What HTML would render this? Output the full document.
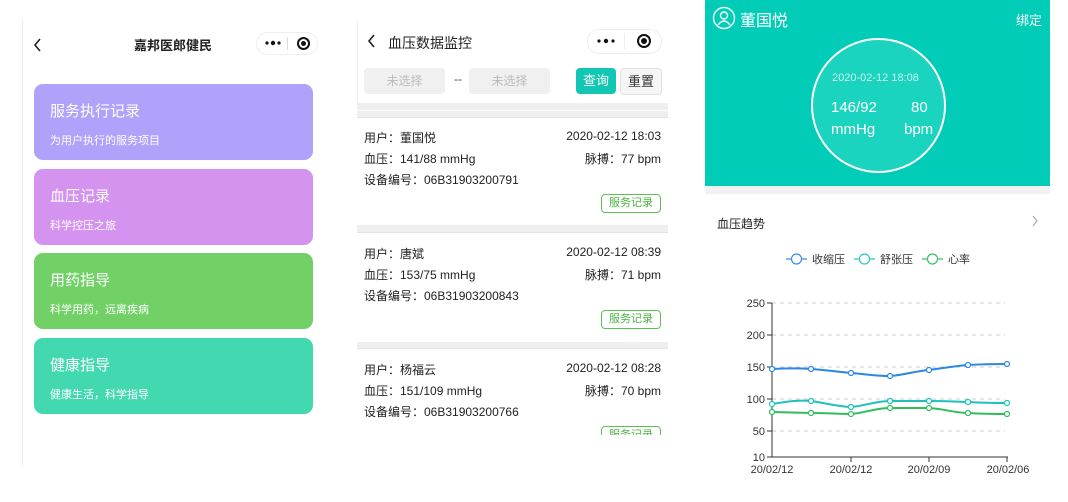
<!DOCTYPE html>
<html><head><meta charset="utf-8"><style>
*{margin:0;padding:0;box-sizing:border-box}
body{width:1068px;height:502px;background:#fff;position:relative;overflow:hidden;font-family:"Liberation Sans","Noto Sans CJK SC",sans-serif;color:#222}
.a{position:absolute}
.card{position:absolute;left:34px;width:279px;height:76px;border-radius:9px;color:#fff}
.card .t{position:absolute;left:16px;top:16px;font-size:15px}
.card .s{position:absolute;left:16px;top:48px;font-size:11px}
.cap{position:absolute;border:1px solid #eee;border-radius:12px;background:#fff}
.rec{position:absolute;left:357px;width:311px;background:#fff;font-size:12px}
.rec .l{position:absolute;left:7px}
.rec .r{position:absolute;right:7px}
.btn{position:absolute;right:7px;width:60px;height:19px;border:1px solid #5cc152;border-radius:4px;color:#4cb343;font-size:11px;text-align:center;line-height:17px}
.band{position:absolute;left:357px;width:311px;background:#efefef}
</style></head><body>
<!-- panel 1 -->
<div class="a" style="left:22px;top:20px;width:1px;height:445px;background:#eee"></div>
<svg class="a" style="left:32px;top:37px" width="10" height="16"><path d="M8 2 L3 8 L8 14" stroke="#222" stroke-width="1.6" fill="none"/></svg>
<div class="a" style="left:120px;top:35px;width:106px;text-align:center;font-size:13px;font-weight:bold">嘉邦医郎健民</div>
<div class="cap" style="left:256px;top:32px;width:62px;height:23px"></div>
<svg class="a" style="left:265px;top:40px" width="16" height="6"><circle cx="2" cy="3" r="1.6" fill="#111"/><circle cx="8" cy="3" r="2.2" fill="#111"/><circle cx="14" cy="3" r="1.6" fill="#111"/></svg>
<div class="a" style="left:287px;top:37px;width:1px;height:13px;background:#ddd"></div>
<div class="a" style="left:297px;top:37px;width:13px;height:13px;border:2px solid #111;border-radius:50%"></div>
<div class="a" style="left:301px;top:41px;width:5px;height:5px;background:#111;border-radius:50%"></div>
<div class="card" style="top:84px;background:#b0a2fb"><div class="t">服务执行记录</div><div class="s">为用户执行的服务项目</div></div>
<div class="card" style="top:169px;background:#d393ee"><div class="t">血压记录</div><div class="s">科学控压之旅</div></div>
<div class="card" style="top:253px;background:#72d166"><div class="t">用药指导</div><div class="s">科学用药，远离疾病</div></div>
<div class="card" style="top:338px;background:#42d8b0"><div class="t">健康指导</div><div class="s">健康生活，科学指导</div></div>

<!-- panel 2 -->
<div class="a" style="left:357px;top:20px;width:1px;height:415px;background:#f3f3f3"></div>
<svg class="a" style="left:366px;top:33px" width="10" height="16"><path d="M8 2 L3 8 L8 14" stroke="#222" stroke-width="1.6" fill="none"/></svg>
<div class="a" style="left:388px;top:33px;font-size:14px">血压数据监控</div>
<div class="cap" style="left:587px;top:29px;width:75px;height:25px"></div>
<svg class="a" style="left:597px;top:38px" width="18" height="6"><circle cx="2" cy="3" r="1.6" fill="#111"/><circle cx="9" cy="3" r="2.2" fill="#111"/><circle cx="16" cy="3" r="1.6" fill="#111"/></svg>
<div class="a" style="left:624px;top:33px;width:1px;height:16px;background:#eee"></div>
<div class="a" style="left:637px;top:34px;width:14px;height:14px;border:2px solid #111;border-radius:50%"></div>
<div class="a" style="left:641px;top:38px;width:6px;height:6px;background:#111;border-radius:50%"></div>
<div class="a" style="left:364px;top:68px;width:81px;height:26px;background:#f0f0f0;border-radius:4px;color:#bbb;font-size:12px;text-align:center;line-height:26px">未选择</div>
<div class="a" style="left:454px;top:72px;font-size:12px;color:#444">--</div>
<div class="a" style="left:469px;top:68px;width:81px;height:26px;background:#f0f0f0;border-radius:4px;color:#bbb;font-size:12px;text-align:center;line-height:26px">未选择</div>
<div class="a" style="left:576px;top:68px;width:40px;height:26px;background:#11c6b2;border-radius:4px;color:#fff;font-size:13px;text-align:center;line-height:26px">查询</div>
<div class="a" style="left:620px;top:68px;width:42px;height:27px;background:#f6f6f6;border:1px solid #e2e2e2;border-radius:4px;color:#333;font-size:13px;text-align:center;line-height:25px">重置</div>
<div class="band" style="top:103px;height:15px;border-bottom:1px solid #e2e2e2"><div style="margin-top:7px;height:1px;background:#fafafa"></div></div>
<div class="rec" style="top:118px;height:107px">
<div class="l" style="top:11px">用户：董国悦</div><div class="r" style="top:11px">2020-02-12 18:03</div>
<div class="l" style="top:32px">血压：141/88 mmHg</div><div class="r" style="top:32px">脉搏：77 bpm</div>
<div class="l" style="top:53px">设备编号：06B31903200791</div>
<div class="btn" style="top:76px">服务记录</div></div>
<div class="band" style="top:225px;height:8px;border-bottom:1px solid #e4e4e4"></div>
<div class="rec" style="top:233px;height:109px">
<div class="l" style="top:12px">用户：唐斌</div><div class="r" style="top:12px">2020-02-12 08:39</div>
<div class="l" style="top:33px">血压：153/75 mmHg</div><div class="r" style="top:33px">脉搏：71 bpm</div>
<div class="l" style="top:54px">设备编号：06B31903200843</div>
<div class="btn" style="top:77px">服务记录</div></div>
<div class="band" style="top:342px;height:7px;border-bottom:1px solid #e4e4e4"></div>
<div class="rec" style="top:349px;height:86px;overflow:hidden">
<div class="l" style="top:12px">用户：杨福云</div><div class="r" style="top:12px">2020-02-12 08:28</div>
<div class="l" style="top:33px">血压：151/109 mmHg</div><div class="r" style="top:33px">脉搏：70 bpm</div>
<div class="l" style="top:54px">设备编号：06B31903200766</div>
<div class="btn" style="top:77px">服务记录</div></div>

<!-- panel 3 -->
<div class="a" style="left:705px;top:0;width:345px;height:186px;background:#00ccb8"></div>
<div class="a" style="left:705px;top:186px;width:345px;height:8px;background:#f2f2f2"></div>
<svg class="a" style="left:712px;top:6px" width="24" height="24"><circle cx="12" cy="12" r="10.5" stroke="#fff" stroke-width="1.4" fill="none"/><circle cx="12" cy="9.5" r="3.5" stroke="#fff" stroke-width="1.4" fill="none"/><path d="M6 19 Q12 11 18 19" stroke="#fff" stroke-width="1.4" fill="none"/></svg>
<div class="a" style="left:740px;top:7px;font-size:16px;color:#fff">董国悦</div>
<div class="a" style="left:1016px;top:10px;font-size:13px;color:#fff">绑定</div>
<div class="a" style="left:811px;top:38px;width:135px;height:135px;border:2px solid #fff;border-radius:50%;background:#1ad4bf"></div>
<div class="a" style="left:832px;top:72px;font-size:11px;color:#c8f4ee">2020-02-12 18:08</div>
<div class="a" style="left:831px;top:99px;font-size:15px;color:#fff">146/92</div>
<div class="a" style="left:911px;top:99px;font-size:15px;color:#fff">80</div>
<div class="a" style="left:831px;top:121px;font-size:15px;color:#fff">mmHg</div>
<div class="a" style="left:904px;top:121px;font-size:15px;color:#fff">bpm</div>
<div class="a" style="left:717px;top:215px;font-size:12px">血压趋势</div>
<svg class="a" style="left:1031px;top:214px" width="8" height="14"><path d="M2 2 L6 7 L2 12" stroke="#aaa" stroke-width="1.2" fill="none"/></svg>
<svg class="a" style="left:700px;top:240px" width="368" height="262" font-family="Liberation Sans, Noto Sans CJK SC, sans-serif" font-size="11">
<g fill="#fff" stroke-width="1.2">
<line x1="86" y1="19" x2="107" y2="19" stroke="#3a8ee6"/><circle cx="96.5" cy="19" r="5" stroke="#3a8ee6"/>
<line x1="154" y1="19" x2="175" y2="19" stroke="#2ec7c0"/><circle cx="164.5" cy="19" r="5" stroke="#2ec7c0"/>
<line x1="222" y1="19" x2="243" y2="19" stroke="#36c265"/><circle cx="232.5" cy="19" r="5" stroke="#36c265"/>
</g>
<g fill="#333"><text x="112" y="23">收缩压</text><text x="180" y="23">舒张压</text><text x="248" y="23">心率</text></g>
<g stroke="#ccc" stroke-dasharray="4 4"><line x1="72" y1="63" x2="305" y2="63"/><line x1="72" y1="95" x2="305" y2="95"/><line x1="72" y1="127" x2="305" y2="127"/><line x1="72" y1="159" x2="305" y2="159"/><line x1="72" y1="191" x2="305" y2="191"/></g>
<g stroke="#333" stroke-width="1"><line x1="72" y1="63" x2="72" y2="217"/><line x1="72" y1="217" x2="308" y2="217"/>
<line x1="67" y1="63" x2="72" y2="63"/><line x1="67" y1="95" x2="72" y2="95"/><line x1="67" y1="127" x2="72" y2="127"/><line x1="67" y1="159" x2="72" y2="159"/><line x1="67" y1="191" x2="72" y2="191"/><line x1="67" y1="217" x2="72" y2="217"/>
<line x1="151" y1="217" x2="151" y2="222"/><line x1="229" y1="217" x2="229" y2="222"/><line x1="307" y1="217" x2="307" y2="222"/></g>
<g fill="#333" text-anchor="end"><text x="65" y="67">250</text><text x="65" y="99">200</text><text x="65" y="131">150</text><text x="65" y="163">100</text><text x="65" y="195">50</text><text x="65" y="221">10</text></g>
<g fill="#333" text-anchor="middle"><text x="72" y="233">20/02/12</text><text x="151" y="233">20/02/12</text><text x="229" y="233">20/02/09</text><text x="308" y="233">20/02/06</text></g>
<g fill="none" stroke-width="2">
<path d="M72 129 C90 128 100 128 111 129 C125 130 140 132 151 133 C165 134 175 136 190 136 C205 135 215 131 229 130 C245 128 255 126 268 125 C285 124 295 124 307 124" stroke="#2c86e3"/>
<path d="M72 164 C90 161 100 160 111 161 C125 163 140 167 151 167 C165 166 175 161 190 161 L229 161 C250 161 260 162 268 162 C285 163 295 163 307 163" stroke="#1fc0bc"/>
<path d="M72 172 L111 173 C125 173 140 174 151 174 C165 173 175 168 190 168 C205 168 215 168 229 168 C245 169 255 173 268 173 C285 174 295 174 307 174" stroke="#2fbd5e"/>
</g>
<g fill="#fff" stroke-width="1.2">
<g stroke="#2c86e3"><circle cx="72" cy="129" r="2.5"/><circle cx="111" cy="129" r="2.5"/><circle cx="151" cy="133" r="2.5"/><circle cx="190" cy="136" r="2.5"/><circle cx="229" cy="130" r="2.5"/><circle cx="268" cy="125" r="2.5"/><circle cx="307" cy="124" r="2.5"/></g>
<g stroke="#1fc0bc"><circle cx="72" cy="164" r="2.5"/><circle cx="111" cy="161" r="2.5"/><circle cx="151" cy="167" r="2.5"/><circle cx="190" cy="161" r="2.5"/><circle cx="229" cy="161" r="2.5"/><circle cx="268" cy="162" r="2.5"/><circle cx="307" cy="163" r="2.5"/></g>
<g stroke="#2fbd5e"><circle cx="72" cy="172" r="2.5"/><circle cx="111" cy="173" r="2.5"/><circle cx="151" cy="174" r="2.5"/><circle cx="190" cy="168" r="2.5"/><circle cx="229" cy="168" r="2.5"/><circle cx="268" cy="173" r="2.5"/><circle cx="307" cy="174" r="2.5"/></g>
</g>
</svg>
</body></html>
